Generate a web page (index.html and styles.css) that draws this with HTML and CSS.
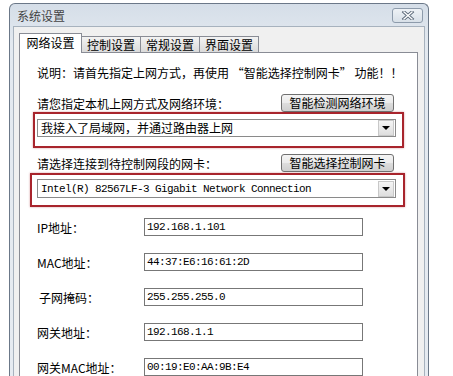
FILE: index.html
```html
<!DOCTYPE html>
<html lang="zh-CN">
<head>
  <meta charset="UTF-8">
  <meta name="viewport" content="width=device-width, initial-scale=1.0">
  <link rel="stylesheet" href="styles.css">
</head>
<body>
  <div class="window">
    <div class="titlebar">
      <span class="title">系统设置</span>
      <button class="close" aria-label="关闭">
        <svg width="14" height="9" viewBox="0 0 14 9">
          <path d="M3 1 L11 8 M11 1 L3 8" stroke="#5d6b7b" stroke-width="3.2" stroke-linecap="square" fill="none"/>
          <path d="M3 1 L11 8 M11 1 L3 8" stroke="#ffffff" stroke-width="1.4" stroke-linecap="square" fill="none"/>
        </svg>
      </button>
    </div>
    <div class="client">
      <div class="tabs">
        <div class="tab active">网络设置</div>
        <div class="tab">控制设置</div>
        <div class="tab">常规设置</div>
        <div class="tab">界面设置</div>
      </div>
      <div class="panel">
        <p class="note">说明：请首先指定上网方式，再使用 “智能选择控制网卡” 功能！！</p>

        <div class="row">
          <span>请您指定本机上网方式及网络环境：</span>
          <button class="btn">智能检测网络环境</button>
        </div>
        <div class="mark mark-mode">
          <div class="combo">
            <span class="combo-text">我接入了局域网，并通过路由器上网</span>
            <span class="combo-arrow"></span>
          </div>
        </div>

        <div class="row row-nic">
          <span>请选择连接到待控制网段的网卡：</span>
          <button class="btn">智能选择控制网卡</button>
        </div>
        <div class="mark mark-nic">
          <div class="combo combo-nic">
            <span class="combo-text mono">Intel(R) 82567LF-3 Gigabit Network Connection</span>
            <span class="combo-arrow"></span>
          </div>
        </div>

        <div class="fields">
          <div class="field"><label>IP地址：</label><div class="input mono">192.168.1.101</div></div>
          <div class="field"><label>MAC地址：</label><div class="input mono">44:37:E6:16:61:2D</div></div>
          <div class="field"><label class="indent">子网掩码：</label><div class="input mono">255.255.255.0</div></div>
          <div class="field"><label>网关地址：</label><div class="input mono">192.168.1.1</div></div>
          <div class="field"><label>网关MAC地址：</label><div class="input mono">00:19:E0:AA:9B:E4</div></div>
        </div>
      </div>
    </div>
  </div>
</body>
</html>
```

FILE: styles.css
```css
body {
  margin: 0;
  background-color: #ffffff;
  font-family: "Noto Sans CJK SC", "Noto Sans", sans-serif;
  font-size: 12px;
  color: #000;
  overflow: hidden;
  height: 376px;
}

.window {
  margin: 3px 0 0 9px;
  width: 420px;
  height: 373px;
  border: 1px solid #6b7888;
  border-bottom: none;
  border-radius: 6px 6px 0 0;
  padding: 0 3px;
  box-sizing: border-box;
  display: flex;
  flex-direction: column;
  background: linear-gradient(#d5dee8, #e3e9f0 40px, #e6ebf1);
}

.titlebar {
  height: 22px;
  flex: none;
  display: flex;
  align-items: center;
  justify-content: space-between;
}

.title {
  padding-left: 4px;
  color: #444;
  font-size: 12px;
}

.close {
  width: 31px;
  height: 15px;
  margin-right: 2px;
  padding: 0;
  border: 1px solid #8d9bab;
  border-radius: 3px;
  background: linear-gradient(#eef2f6, #d8e0e8);
  display: flex;
  align-items: center;
  justify-content: center;
}

.client {
  flex: 1;
  border: 1px solid #a7b2be;
  border-bottom: none;
  background-color: #f0f0f0;
  padding: 6px 7px 0 5px;
  display: flex;
  flex-direction: column;
}

.tabs {
  display: flex;
  align-items: flex-end;
  height: 20px;
  flex: none;
  margin-bottom: -1px;
  position: relative;
  z-index: 1;
}

.tab {
  box-sizing: border-box;
  width: 60px;
  height: 16px;
  margin-bottom: 1px;
  margin-left: -1px;
  border: 1px solid #898c95;
  border-bottom: none;
  background: linear-gradient(#f3f3f3, #e6e6e6 50%, #dadada);
  text-align: center;
  line-height: 15px;
}

.tab.active {
  width: 63px;
  height: 20px;
  margin: 0;
  background: #fff;
  line-height: 18px;
}

.panel {
  flex: 1;
  background-color: #fff;
  border: 1px solid #898c95;
  border-bottom: none;
  width: 399px;
  padding-left: 17px;
  box-sizing: border-box;
}

.note {
  margin: 12px 0 0;
  line-height: 16px;
}

.row {
  width: 357px;
  height: 18px;
  margin-top: 13px;
  display: flex;
  justify-content: space-between;
  align-items: center;
}

.row-nic {
  margin-top: 6px;
}

.btn {
  width: 113px;
  height: 18px;
  padding: 0;
  font-family: inherit;
  font-size: 12px;
  line-height: 16px;
  color: #000;
  border: 1px solid #707070;
  border-radius: 3px;
  background: linear-gradient(#f4f4f4, #ebebeb 50%, #dddddd 51%, #cfcfcf);
}

.mark {
  border: 2px solid #a8242c;
  box-shadow: 0 0 2px rgba(168, 36, 44, 0.45);
  box-sizing: border-box;
}

.mark-mode {
  margin-left: -4px;
  width: 371px;
  height: 36px;
  padding: 5px 0 0 2px;
}

.mark-nic {
  margin: 1px 0 0 -7px;
  width: 375px;
  height: 34px;
  padding: 4px 0 0 5px;
}

.combo {
  width: 359px;
  height: 18px;
  box-sizing: border-box;
  border: 1px solid #8a8a8a;
  background: #fff;
  display: flex;
  align-items: center;
  justify-content: space-between;
}

.combo-nic {
  height: 19px;
}

.combo-text {
  padding-left: 3px;
  line-height: 16px;
}

.combo-arrow {
  width: 14px;
  height: 14px;
  margin-right: 1px;
  border: 1px solid #c8c8c8;
  background: linear-gradient(#f5f5f5, #dedede);
  position: relative;
}

.combo-arrow::after {
  content: "";
  position: absolute;
  left: 3px;
  top: 5px;
  border-left: 4px solid transparent;
  border-right: 4px solid transparent;
  border-top: 4px solid #000;
}

.mono {
  font-family: "Liberation Mono", "DejaVu Sans Mono", monospace;
  font-size: 11px;
  letter-spacing: -0.6px;
}

.fields {
  margin-top: 11px;
  display: flex;
  flex-direction: column;
  gap: 17px;
}

.field {
  display: flex;
  align-items: center;
  height: 18px;
}

.field label {
  width: 107px;
}

.field label.indent {
  padding-left: 2px;
  width: 105px;
}

.input {
  width: 219px;
  height: 18px;
  box-sizing: border-box;
  border: 1px solid #777;
  padding-left: 2px;
  line-height: 16px;
}
```
